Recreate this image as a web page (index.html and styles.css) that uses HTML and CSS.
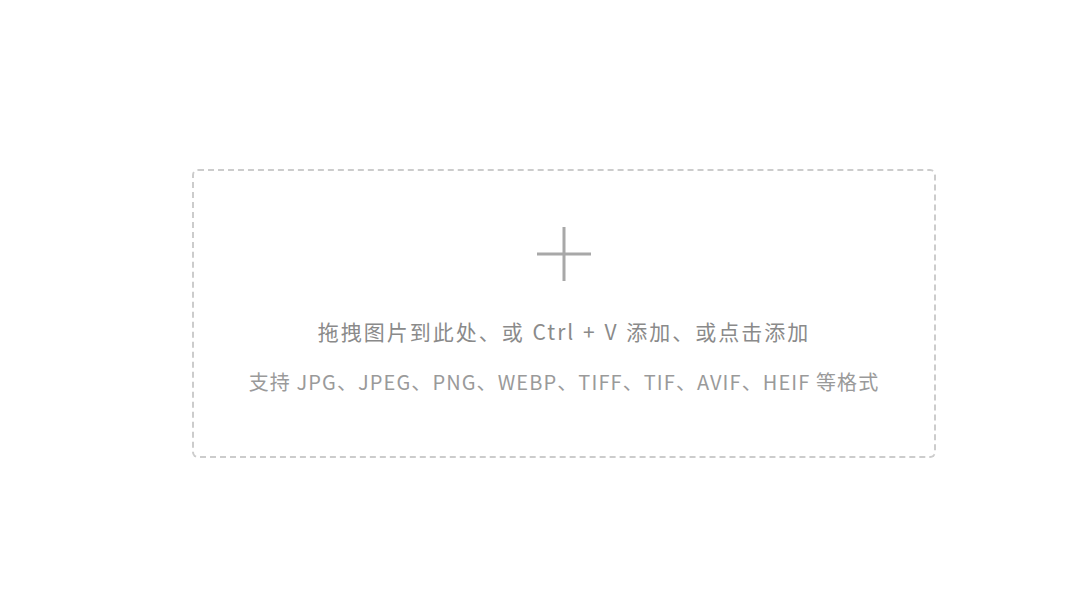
FILE: index.html
```html
<!DOCTYPE html>
<html lang="zh-CN">
<head>
<meta charset="utf-8">
<link rel="stylesheet" href="styles.css">
</head>
<body>
<main class="page">
  <div class="dropzone">
    <svg class="plus" width="56" height="56" viewBox="0 0 56 56" aria-hidden="true">
      <path d="M28 1V55M1 28H55" stroke="#a8a8a8" stroke-width="3" fill="none"/>
    </svg>
    <p class="hint">拖拽图片到此处、或 Ctrl + V 添加、或点击添加</p>
    <p class="formats">支持 JPG、JPEG、PNG、WEBP、TIFF、TIF、AVIF、HEIF 等格式</p>
  </div>
</main>
</body>
</html>
```
FILE: styles.css
```css
html, body {
  margin: 0;
  padding: 0;
  background: #ffffff;
}
.page {
  padding: 169px 0 0 192px;
}
.dropzone {
  box-sizing: border-box;
  width: 744px;
  height: 289px;
  border: 2px dashed #cccccc;
  border-radius: 6px;
  display: flex;
  flex-direction: column;
  align-items: center;
  padding-top: 55px;
  font-family: "Noto Sans CJK SC", "Noto Sans", sans-serif;
}
.plus {
  display: block;
}
.hint {
  margin: 34px 0 0;
  font-size: 21px;
  line-height: 30px;
  color: #8a8a8a;
  letter-spacing: 2px;
  word-spacing: 1px;
}
.formats {
  margin: 21px 0 0;
  font-size: 20px;
  line-height: 30px;
  color: #9a9a9a;
  letter-spacing: 1.1px;
}
```
